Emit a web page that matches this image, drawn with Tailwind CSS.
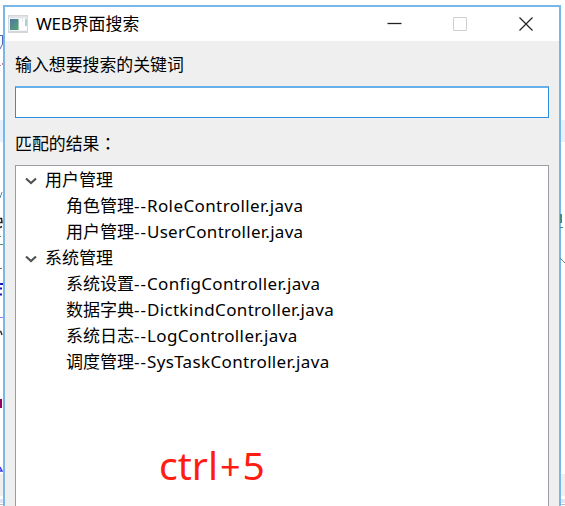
<!DOCTYPE html>
<html lang="zh-CN">
<head>
<meta charset="utf-8">
<title>WEB界面搜索</title>
<script src="https://cdn.jsdelivr.net/npm/@tailwindcss/browser@4"></script>
</head>
<body class="relative h-[506px] w-[565px] overflow-hidden bg-white font-['Noto_Sans','Noto_Sans_CJK_SC',sans-serif] text-[17px] text-black">
<!-- editor behind the dialog -->
<svg class="absolute inset-0" width="565" height="506" viewBox="0 0 565 506" fill="none">
  <path fill="#e6f1ff" d="M0 120h565v22H0z"/>
  <path fill="#efefef" d="M0 474h565v22H0z"/>
  <path fill="#dfe5f7" d="M0 499h565v4H0z"/>
  <path stroke="#b8bcc8" d="M0 504.500h565"/>
  <path stroke="#4967b5" d="M0 35.500h3M2.500 35v9L0 49"/>
  <path stroke="#ef7777" stroke-width="2" d="M2 64h1"/>
  <path stroke="#8d8fc0" d="M0 65.500h1"/>
  <path stroke="#518fa0" d="M0 198l2-6"/>
  <path stroke="#222" stroke-width="1.500" d="M0 218.500h1.500l.5 4H0M0 227.500l2-1"/>
  <path stroke="#4b8b75" d="M0 236.500h1M0 244.500h3"/>
  <path stroke="#777" d="M0 268.500h2"/>
  <path stroke="#1818bd" d="M0 284h3M0 288.500h2M0 294.500h2" stroke-width="2"/>
  <path stroke="#8181ff" d="M0 317.500h3"/>
  <path stroke="#333" stroke-width="1.500" d="M0 331l1 1 1 3"/>
  <path fill="#96005f" d="M0 399h2v9H0z"/>
  <path stroke="#3939f5" stroke-width="1.500" d="M0 467l2 4H0"/>
</svg>

<main class="relative ml-[3px] mt-[5px] flex h-[520px] w-[558px] flex-col border-2 border-[#78b7e8] bg-[#efefef]">
  <header class="flex h-[34px] shrink-0 items-center bg-white pl-[3px]">
    <svg width="21" height="18" viewBox="0 0 21 18">
      <defs><linearGradient id="pane" x1="0" y1="0" x2="1" y2="1"><stop stop-color="#4d77a8"/><stop offset="1" stop-color="#55a66b"/></linearGradient></defs>
      <path fill="#d5d7da" d="M0 0h20v18H0z"/><path fill="#f1f3f5" d="M1 1h18v15H1z"/>
      <path fill="#e2e4e7" d="M1 1h18v2H1z"/>
      <path fill="url(#pane)" d="M2 4h8.500v11H2z"/><path fill="#fff" d="M11.500 4h7v11h-7z"/>
      <path fill="#62a796" d="M17.500 4h1v7h-1z"/><path fill="#dfe5e8" d="M14 4h1v3h-1z"/>
    </svg>
    <h1 class="ml-[7px] h-[26px] whitespace-nowrap leading-[26px]"><span class="tracking-[-0.2px]">WEB</span><span class="text-[16.900px]">界面搜索</span></h1>
    <svg class="ml-auto mr-[25px]" width="147" height="16" viewBox="0 0 147 16" fill="none">
      <path stroke="#222" stroke-width="1.300" d="M0.500 7.500h14"/>
      <path stroke="#d0d0d0" d="M66.500 1.500h13v13h-13z"/>
      <path stroke="#222" stroke-width="1.200" d="M132.500 1.500l13 13m0-13l-13 13"/>
    </svg>
  </header>
  <section class="flex grow flex-col pl-[10px] pr-[10px]">
    <label for="keyword" class="mt-[11px] h-[26px] text-[16.900px] leading-[26px]">输入想要搜索的关键词</label>
    <input id="keyword" type="text" class="mt-[8px] h-[32px] shrink-0 border border-t-2 border-[#2e8de0] border-t-[#68b0ea] bg-white px-2 outline-none">
    <p class="mt-[12px] h-[26px] text-[16.900px] leading-[26px]">匹配的结果<span lang="zh-TW" class="font-['Noto_Sans_CJK_TC']">：</span></p>
    <div class="mt-[9px] grow border border-[#9a9da5] bg-white pt-px leading-[26px]">
      <div class="flex h-[26px] items-center"><svg class="ml-[9px] mr-[8px] mt-px" width="12" height="8" viewBox="0 0 12 8" fill="none"><path stroke="#505050" stroke-width="2.100" d="M1 1.500l5 4.500 5-4.500"/></svg>用户管理</div>
      <div class="h-[26px] whitespace-nowrap pl-[50px]">角色管理<span class="tracking-[1px]">--</span><span class="tracking-[0.4px]">RoleController.java</span></div>
      <div class="h-[26px] whitespace-nowrap pl-[50px]">用户管理<span class="tracking-[1px]">--</span><span class="tracking-[0.28px]">UserController.java</span></div>
      <div class="flex h-[26px] items-center"><svg class="ml-[9px] mr-[8px] mt-px" width="12" height="8" viewBox="0 0 12 8" fill="none"><path stroke="#505050" stroke-width="2.100" d="M1 1.500l5 4.500 5-4.500"/></svg>系统管理</div>
      <div class="h-[26px] whitespace-nowrap pl-[50px]">系统设置<span class="tracking-[1px]">--</span><span class="tracking-[0.35px]">ConfigController.java</span></div>
      <div class="h-[26px] whitespace-nowrap pl-[50px]">数据字典<span class="tracking-[1px]">--</span><span class="tracking-[0.33px]">DictkindController.java</span></div>
      <div class="h-[26px] whitespace-nowrap pl-[50px]">系统日志<span class="tracking-[1px]">--</span><span class="tracking-[0.4px]">LogController.java</span></div>
      <div class="h-[26px] whitespace-nowrap pl-[50px]">调度管理<span class="tracking-[1px]">--</span><span class="tracking-[0.35px]">SysTaskController.java</span></div>
    </div>
  </section>
</main>
<!-- fragments of editor text along the dialog's right edge -->
<svg class="absolute left-[560px] top-[214px]" width="5" height="50" viewBox="0 0 5 50" fill="none">
  <path fill="#438b82" d="M0 0h2v9H0zM0 13h3v1H0z"/><path stroke="#579078" d="M0 44l5 5"/>
</svg>
<p class="absolute left-[159px] top-[437px] whitespace-nowrap text-[39px] leading-[56px] text-[#ff1d12]">ctrl<span class="ml-[2px] mr-[2px] text-[36px]">+</span>5</p>
</body>
</html>
